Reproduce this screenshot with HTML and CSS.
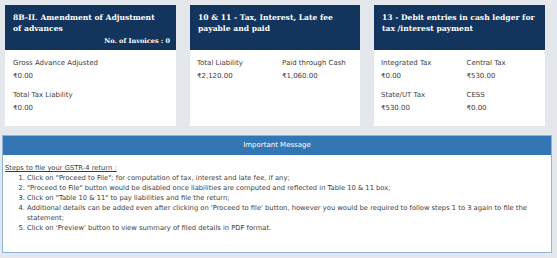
FILE: index.html
```html
<!DOCTYPE html>
<html lang="en">
<head>
    <meta charset="UTF-8">
    <title>GSTR-4 Summary</title>
    <link rel="stylesheet" href="styles.css">
</head>
<body>
    <div class="tiles">
        <div class="tile">
            <div class="tile-head with-count">
                <h3>8B-II. Amendment of Adjustment of advances</h3>
                <div class="inv-count">No. of Invoices : 0</div>
            </div>
            <div class="tile-body">
                <div class="field full">
                    <span class="label">Gross Advance Adjusted</span>
                    <span class="value">&#8377;0.00</span>
                </div>
                <div class="field full">
                    <span class="label">Total Tax Liability</span>
                    <span class="value">&#8377;0.00</span>
                </div>
            </div>
        </div>

        <div class="tile">
            <div class="tile-head">
                <h3>10 &amp; 11 - Tax, Interest, Late fee payable and paid</h3>
            </div>
            <div class="tile-body">
                <div class="field">
                    <span class="label">Total Liability</span>
                    <span class="value">&#8377;2,120.00</span>
                </div>
                <div class="field">
                    <span class="label">Paid through Cash</span>
                    <span class="value">&#8377;1,060.00</span>
                </div>
            </div>
        </div>

        <div class="tile">
            <div class="tile-head">
                <h3>13 - Debit entries in cash ledger for tax /interest payment</h3>
            </div>
            <div class="tile-body">
                <div class="field">
                    <span class="label">Integrated Tax</span>
                    <span class="value">&#8377;0.00</span>
                </div>
                <div class="field">
                    <span class="label">Central Tax</span>
                    <span class="value">&#8377;530.00</span>
                </div>
                <div class="field">
                    <span class="label">State/UT Tax</span>
                    <span class="value">&#8377;530.00</span>
                </div>
                <div class="field">
                    <span class="label">CESS</span>
                    <span class="value">&#8377;0.00</span>
                </div>
            </div>
        </div>
    </div>

    <div class="message">
        <div class="message-head">Important Message</div>
        <div class="message-body">
            <p class="steps-title">Steps to file your GSTR-4 return :</p>
            <ol>
                <li>Click on "Proceed to File"; for computation of tax, interest and late fee, if any;</li>
                <li>"Proceed to File" button would be disabled once liabilities are computed and reflected in Table 10 &amp; 11 box;</li>
                <li>Click on "Table 10 &amp; 11" to pay liabilities and file the return;</li>
                <li>Additional details can be added even after clicking on 'Proceed to file' button, however you would be required to follow steps 1 to 3 again to file the statement;</li>
                <li>Click on 'Preview' button to view summary of filed details in PDF format.</li>
            </ol>
        </div>
    </div>
</body>
</html>
```

FILE: styles.css
```css
:root {
    --page-bg: #e4e7eb;
    --navy: #13345c;
    --panel-blue: #3276b4;
    --text: #3d3d3d;
}

* {
    margin: 0;
    padding: 0;
    box-sizing: border-box;
}

body {
    background: var(--page-bg);
    font-family: 'DejaVu Sans', Verdana, sans-serif;
    color: var(--text);
    padding: 5px 5px 0 2px;
}

/* Summary tiles */
.tiles {
    display: grid;
    grid-template-columns: 171px 170px 171px;
    gap: 14px;
    margin-left: 3px;
}

.tile {
    background: #fff;
    height: 121px;
}

.tile-head {
    background: var(--navy);
    color: #fff;
    height: 45px;
    padding: 7px 7px 0 8px;
}

.tile-head.with-count {
    padding-right: 12px;
}

.tile-head h3 {
    font-family: 'DejaVu Serif', Georgia, serif;
    font-size: 7.6px;
    font-weight: bold;
    line-height: 11px;
}

.inv-count {
    font-family: 'DejaVu Serif', Georgia, serif;
    font-size: 6.5px;
    font-weight: bold;
    line-height: 9px;
    text-align: right;
    margin-top: 3px;
    margin-right: -6px;
}

.tile-body {
    display: flex;
    flex-wrap: wrap;
    padding-top: 7px;
}

.field {
    width: 50%;
    padding-left: 7px;
    display: flex;
    flex-direction: column;
    margin-bottom: 6px;
}

.field.full {
    width: 100%;
    padding-left: 8px;
}

.label,
.value {
    font-size: 7px;
    line-height: 13px;
}

/* Important message panel */
.message {
    margin-top: 9px;
    width: 550px;
    background: #fff;
    border: 1px solid #8db5da;
}

.message-head {
    background: var(--panel-blue);
    color: #fff;
    text-align: center;
    font-size: 7px;
    height: 19px;
    line-height: 19px;
}

.message-body {
    padding: 8px 4px 19px 2px;
    font-size: 6.75px;
    line-height: 10px;
}

.steps-title {
    text-decoration: underline;
}

.message-body ol {
    padding-left: 22px;
}
```
